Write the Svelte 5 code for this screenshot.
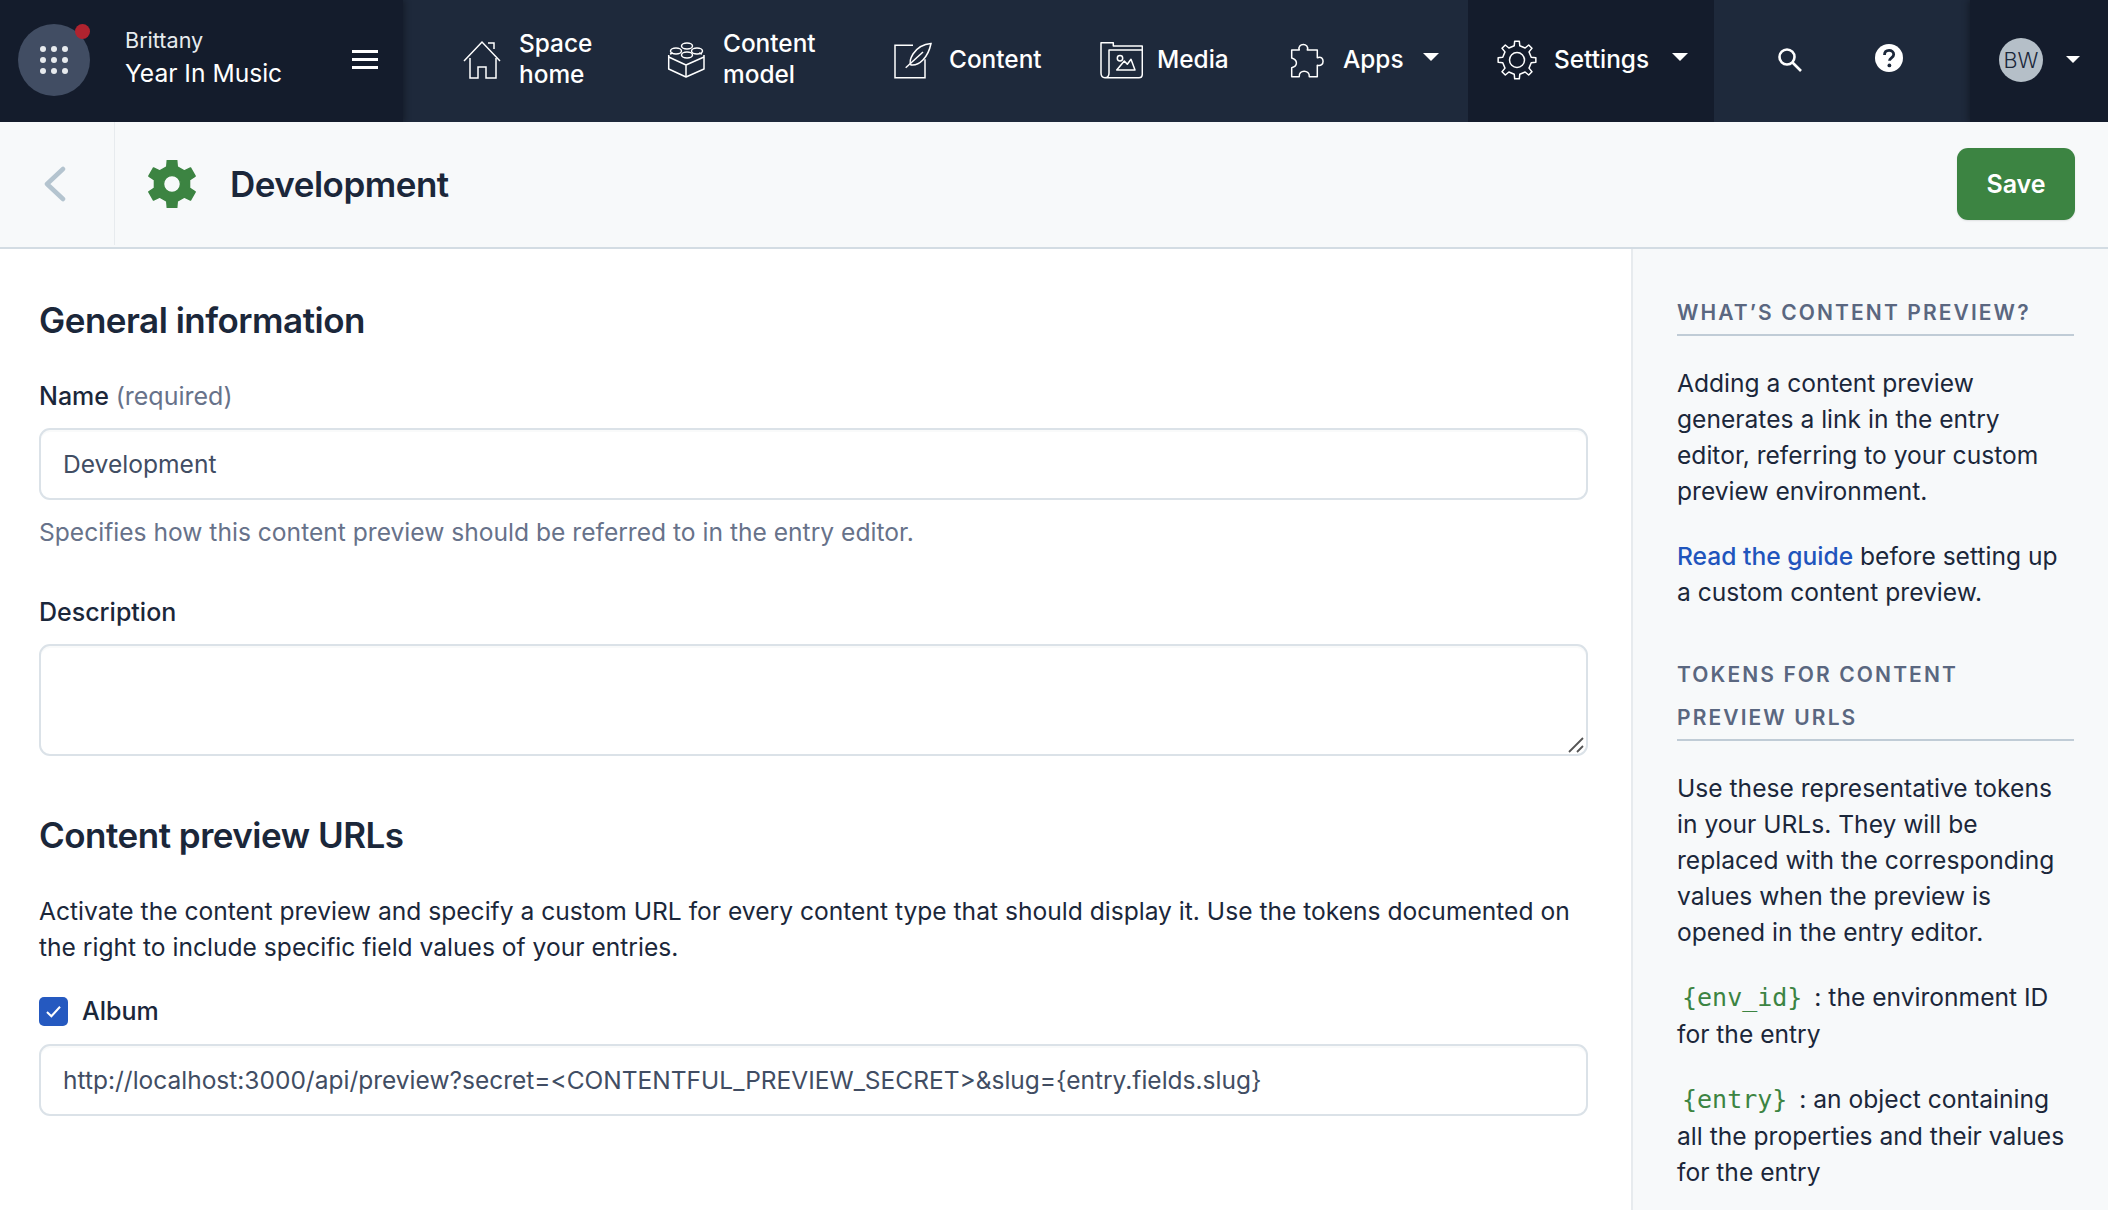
<script>
	const navItems = [
		{ id: 'home', label: ['Space', 'home'] },
		{ id: 'model', label: ['Content', 'model'] },
		{ id: 'content', label: ['Content'] },
		{ id: 'media', label: ['Media'] },
		{ id: 'apps', label: ['Apps'], caret: true }
	];

	// toothed outline around a centre, used by both gear icons
	function gearPath(c, teeth, outer, inner, tipHalf, rootHalf) {
		const pt = (r, deg) => {
			const a = ((deg - 90) * Math.PI) / 180;
			return `${(c + r * Math.cos(a)).toFixed(2)} ${(c + r * Math.sin(a)).toFixed(2)}`;
		};
		const parts = [];
		for (let i = 0; i < teeth; i++) {
			const mid = (360 / teeth) * i;
			parts.push(pt(inner, mid - rootHalf), pt(outer, mid - tipHalf), pt(outer, mid + tipHalf), pt(inner, mid + rootHalf));
		}
		return 'M' + parts.join('L') + 'Z';
	}

	const settingsGear = gearPath(20, 8, 19, 14.5, 7, 11);
	const greenGear = gearPath(24, 6, 24.5, 18, 11, 17);
</script>

<div class="page">
	<nav class="nav">
		<div class="org">
			<div class="switcher">
				<svg viewBox="0 0 28 28" width="28" height="28" fill="#e7ebee">
					{#each [3, 14, 25] as y}
						{#each [3, 14, 25] as x}
							<circle cx={x} cy={y} r="3" />
						{/each}
					{/each}
				</svg>
				<span class="dot"></span>
			</div>
			<div class="org-names">
				<div class="org-small">Brittany</div>
				<div class="org-big">Year In Music</div>
			</div>
			<div class="burger"><span></span><span></span><span></span></div>
		</div>

		<div class="items">
			{#each navItems as item}
				<div class="item item-{item.id}">
					{#if item.id === 'home'}
						<svg class="nav-icon" viewBox="0 0 40 40" fill="none" stroke="#fff" stroke-width="1.5">
							<path d="M2 21 20 2l18 19" />
							<path d="M26 3h6v6" />
							<path d="M8 18v20h8V27h8v11h10V18" />
						</svg>
					{:else if item.id === 'model'}
						<svg class="nav-icon" viewBox="0 0 40 40" fill="none" stroke="#fff" stroke-width="1.5" stroke-linejoin="round">
							<path d="M1.7 15v14L19 37l18-8V15" />
							<path d="M1.7 17 19 25l18-8M19 25v12" />
							<path d="M3 14l3-1M35 14l-3-1" />
							<ellipse cx="9" cy="11" rx="5.5" ry="3" />
							<ellipse cx="20" cy="6" rx="5.5" ry="3" />
							<ellipse cx="30" cy="11" rx="5.5" ry="3" />
							<ellipse cx="20" cy="15" rx="5.5" ry="3" />
						</svg>
					{:else if item.id === 'content'}
						<svg class="nav-icon" viewBox="0 0 40 40" fill="none" stroke="#fff" stroke-width="1.5">
							<path d="M20 5.3H2v32.4h30V19.3" />
							<path d="M38 3.5C30 4 24 8 20 14c-3 5-4 8-2 11 8 1 17-7 20-21.500z" />
							<path d="M12.700 27.700 30 12" />
						</svg>
					{:else if item.id === 'media'}
						<svg class="nav-icon wide" viewBox="0 0 44 40" fill="none" stroke="#fff" stroke-width="1.5" stroke-linejoin="round">
							<path d="M6 37.700h34c2 0 3.300-1.300 3.300-3.700V6h-29V2.700H2V33c0 3 1.500 4.700 4 4.700s4-1.700 4-4.700V10h33.300" />
							<circle cx="21" cy="18.300" r="2.700" />
							<path d="M17.700 30l7.600-9 3 3.300 3.700-5L36 30z" />
						</svg>
					{:else if item.id === 'apps'}
						<svg class="nav-icon" viewBox="0 0 40 40" fill="none" stroke="#fff" stroke-width="1.5" stroke-linejoin="round">
							<path d="M5.700 10h7.600c-2.700-7.300 10.700-7.300 8 0h10v7.700c7.700-3.400 7.700 10 0 7.600v11.400h-8c.7-7.400-11-7.400-10 0H5.700v-9c6.300-1.700 6.300-7.700 0-9.700z" />
						</svg>
					{/if}
					<span class="item-label">
						{#each item.label as line}<span>{line}</span>{/each}
					</span>
					{#if item.caret}<span class="caret"></span>{/if}
				</div>
			{/each}
		</div>

		<div class="settings">
			<svg class="nav-icon" viewBox="0 0 40 40" fill="none" stroke="#fff" stroke-width="1.5" stroke-linejoin="round">
				<path d={settingsGear} />
				<circle cx="20" cy="20" r="7.500" />
			</svg>
			<span class="item-label"><span>Settings</span></span>
			<span class="caret"></span>
		</div>

		<div class="tools">
			<svg class="search" viewBox="0 0 26 26" fill="none" stroke="#fff" stroke-width="2.600">
				<circle cx="10" cy="10" r="7.500" />
				<path d="M15.500 15.500 24 24" />
			</svg>
			<svg class="help" viewBox="0 0 28 28">
				<circle cx="14" cy="14" r="14" fill="#fff" />
				<path d="M9.500 11c0-3 2-4.600 4.600-4.600s4.600 1.600 4.600 4c0 3.400-4.200 3.400-4.200 6.400" fill="none" stroke="#1b273a" stroke-width="2.800" />
				<circle cx="14.400" cy="21.400" r="1.900" fill="#1b273a" />
			</svg>
		</div>

		<div class="account">
			<div class="avatar">BW</div>
			<span class="caret small"></span>
		</div>
	</nav>

	<header class="subheader">
		<div class="back">
			<svg viewBox="0 0 22 36" width="22" height="36" fill="none" stroke="#b4c4cf" stroke-width="4.500" stroke-linecap="round" stroke-linejoin="round">
				<path d="M19 3 3 18l16 15" />
			</svg>
		</div>
		<div class="subheader-title">
			<svg class="gear" viewBox="0 0 48 48" fill="#3c8442" stroke="#3c8442" stroke-width="1.500" stroke-linejoin="round">
				<path fill-rule="evenodd" d="{greenGear}M24 15.500a8.500 8.500 0 1 0 0 17 8.500 8.500 0 0 0 0-17z" />
			</svg>
			<h1>Development</h1>
		</div>
		<button class="save">Save</button>
	</header>

	<div class="body">
		<main class="main">
			<h2>General information</h2>
			<div class="label first">Name <span class="req">(required)</span></div>
			<input class="field" type="text" value="Development" />
			<p class="hint">Specifies how this content preview should be referred to in the entry editor.</p>

			<div class="label desc">Description</div>
			<div class="area-wrap">
				<textarea class="field area"></textarea>
				<svg class="grip" viewBox="0 0 16 16" fill="none" stroke="#555" stroke-width="1.800">
					<path d="M1 15 15 1M9 15l6-6" />
				</svg>
			</div>

			<h2 class="second">Content preview URLs</h2>
			<p class="lead">
				Activate the content preview and specify a custom URL for every content type that should display it. Use the tokens documented on the right to include specific field values of your entries.
			</p>
			<div class="check-row">
				<span class="check">
					<svg viewBox="0 0 16 16" width="19" height="19" fill="none" stroke="#fff" stroke-width="1.700"><path d="M2.500 8.500 6.200 12 13.500 4" /></svg>
				</span>
				<span class="check-label">Album</span>
			</div>
			<input class="field url" type="text" value={'http://localhost:3000/api/preview?secret=<CONTENTFUL_PREVIEW_SECRET>&slug={entry.fields.slug}'} />
		</main>

		<aside class="side">
			<h3>What’s content preview?</h3>
			<p>Adding a content preview generates a link in the entry editor, referring to your custom preview environment.</p>
			<p><a href="#guide">Read the guide</a> before setting up a custom content preview.</p>
			<h3 class="tokens">Tokens for content preview URLs</h3>
			<p>Use these representative tokens in your URLs. They will be replaced with the corresponding values when the preview is opened in the entry editor.</p>
			<p><code>{'{env_id}'}</code> : the environment ID for the entry</p>
			<p><code>{'{entry}'}</code> : an object containing all the properties and their values for the entry</p>
		</aside>
	</div>
</div>

<style>
	:global(body) {
		margin: 0;
		background: #fff;
	}

	.page {
		width: 2108px;
		height: 1210px;
		overflow: hidden;
		display: flex;
		flex-direction: column;
		font-family: Inter, 'Liberation Sans', sans-serif;
		font-size: 24.6px;
		line-height: 36px;
		color: #1b273a;
	}

	/* ------------ nav */

	.nav {
		flex: 0 0 122px;
		display: flex;
		background: #1e293b;
		color: #fff;
	}

	.org {
		width: 403px;
		flex: none;
		display: flex;
		align-items: center;
		padding: 0 0 3px 18px;
		box-sizing: border-box;
		background: #141c2c;
		box-shadow: 2px 0 6px rgba(0, 0, 0, 0.3);
	}

	.switcher {
		position: relative;
		width: 72px;
		height: 72px;
		flex: none;
		display: flex;
		align-items: center;
		justify-content: center;
		border-radius: 50%;
		background: #414d63;
	}

	.dot {
		position: absolute;
		top: 0;
		right: 0;
		width: 15px;
		height: 15px;
		border-radius: 50%;
		background: #b0232f;
	}

	.org-names {
		margin-left: 35px;
		margin-bottom: 5px;
		flex: 1;
	}

	.org-small {
		font-size: 21.6px;
		line-height: 32px;
		color: #e7ebee;
	}

	.org-big {
		line-height: 34px;
	}

	.burger {
		display: flex;
		flex-direction: column;
		gap: 5px;
		margin-right: 25px;
	}

	.burger span {
		display: block;
		width: 26px;
		height: 3px;
		background: #fff;
	}

	.items {
		display: flex;
		align-items: center;
		padding: 0 0 3px 59px;
		width: 1065px;
		box-sizing: border-box;
		flex: none;
	}

	.item {
		display: flex;
		align-items: center;
	}

	.item-home { width: 205px; }
	.item-model { width: 226px; }
	.item-content { width: 206px; }
	.item-media { width: 187px; }

	.item-home .item-label,
	.item-model .item-label {
		margin-bottom: 2px;
	}

	.nav-icon {
		width: 40px;
		height: 40px;
		flex: none;
		margin-right: 17px;
	}

	.item-model .nav-icon,
	.item-content .nav-icon {
		margin-right: 16px;
	}

	.nav-icon.wide {
		width: 44px;
		margin-right: 14px;
	}

	.item-label {
		display: flex;
		flex-direction: column;
		font-size: 24.4px;
		line-height: 31px;
		font-weight: 500;
	}

	.caret {
		width: 0;
		height: 0;
		margin-left: 19px;
		margin-top: -6px;
		border-left: 8px solid transparent;
		border-right: 8px solid transparent;
		border-top: 8px solid #fff;
	}

	.settings {
		width: 246px;
		flex: none;
		display: flex;
		align-items: center;
		padding: 0 0 3px 29px;
		box-sizing: border-box;
		background: #141c2c;
	}

	.settings .caret {
		margin-left: 23px;
	}

	.tools {
		width: 256px;
		flex: none;
		display: flex;
		align-items: center;
		padding: 0 0 3px 63px;
		gap: 72px;
		box-sizing: border-box;
	}

	.search {
		width: 26px;
		height: 26px;
	}

	.help {
		width: 28px;
		height: 28px;
		margin-top: -4px;
	}

	.account {
		flex: 1;
		display: flex;
		align-items: center;
		padding: 0 0 3px 29px;
		background: #141c2c;
		box-shadow: -2px 0 6px rgba(0, 0, 0, 0.3);
	}

	.avatar {
		width: 44px;
		height: 44px;
		border-radius: 50%;
		background: #b5bfc8;
		color: #1b273a;
		font-size: 21.6px;
		font-weight: 300;
		text-align: center;
		line-height: 44px;
	}

	.caret.small {
		margin-left: 23px;
		margin-top: 0;
		border-left-width: 7px;
		border-right-width: 7px;
		border-top-width: 7px;
	}

	/* ------------ subheader */

	.subheader {
		flex: 0 0 127px;
		box-sizing: border-box;
		display: flex;
		align-items: center;
		padding-bottom: 2px;
		background: #f7f9fa;
		border-bottom: 2px solid #d3dce3;
	}

	.back {
		width: 115px;
		height: 100%;
		box-sizing: border-box;
		flex: none;
		display: flex;
		align-items: center;
		padding-left: 44px;
		border-right: 1px solid #e7ebee;
	}

	.subheader-title {
		flex: 1;
		display: flex;
		align-items: center;
		padding-left: 33px;
	}

	.gear {
		width: 48px;
		height: 48px;
		margin-right: 34px;
	}

	h1 {
		margin: 0;
		font-size: 35px;
		line-height: 44px;
		font-weight: 600;
		letter-spacing: -0.5px;
	}

	.save {
		width: 118px;
		height: 72px;
		margin-right: 33px;
		padding: 0;
		border: none;
		border-radius: 11px;
		background: #3c8442;
		color: #fff;
		font: 600 25px Inter, sans-serif;
		box-shadow: 0 1px 2px rgba(0, 0, 0, 0.1);
	}

	/* ------------ body */

	.body {
		flex: 1;
		display: flex;
		min-height: 0;
	}

	.main {
		width: 1631px;
		flex: none;
		box-sizing: border-box;
		padding: 48px 43px 0 39px;
	}

	h2 {
		margin: 0;
		font-size: 35px;
		line-height: 46px;
		font-weight: 600;
		letter-spacing: -0.5px;
	}

	h2.second {
		margin-top: 56px;
	}

	.label {
		font-size: 25px;
		font-weight: 500;
	}

	.label.first {
		margin-top: 35px;
		margin-bottom: 14px;
	}

	.label.desc {
		margin-top: 44px;
		margin-bottom: 14px;
	}

	.req {
		font-weight: 400;
		color: #67728a;
	}

	.field {
		display: block;
		width: 100%;
		height: 72px;
		box-sizing: border-box;
		padding: 0 22px;
		border: 2px solid #dbe2e8;
		border-radius: 11px;
		background: #fff;
		color: #414d63;
		font: 400 24.6px Inter, sans-serif;
		outline: none;
		box-shadow: inset 0 2px 0 rgba(225, 228, 232, 0.2);
	}

	.url {
		font-size: 24.5px;
	}

	.area-wrap {
		position: relative;
	}

	.area {
		height: 112px;
		resize: none;
	}

	.grip {
		position: absolute;
		right: 4px;
		bottom: 3px;
		width: 16px;
		height: 16px;
	}

	.hint {
		margin: 14px 0 0;
		color: #67728a;
	}

	.lead {
		margin: 35px 0 0;
	}

	.check-row {
		display: flex;
		align-items: center;
		margin-top: 28px;
		margin-bottom: 15px;
		height: 36px;
	}

	.check {
		width: 29px;
		height: 29px;
		display: flex;
		align-items: center;
		justify-content: center;
		border-radius: 5px;
		background: #2559c0;
	}

	.check-label {
		margin-left: 14px;
		font-size: 25px;
		font-weight: 500;
	}

	.side {
		flex: 1;
		box-sizing: border-box;
		padding: 42px 34px 0 44px;
		background: #f7f9fa;
		border-left: 2px solid #e7ebee;
	}

	h3 {
		margin: 0 0 29px;
		border-bottom: 2px solid #c0ccd6;
		font-size: 21px;
		line-height: 43px;
		font-weight: 600;
		letter-spacing: 0.1em;
		text-transform: uppercase;
		color: #5a6780;
	}

	h3.tokens {
		margin-top: 43px;
	}

	.side p {
		margin: 0 0 29px;
	}

	.side a {
		color: #1f55bd;
		font-weight: 500;
		text-decoration: none;
	}

	code {
		font-family: 'DejaVu Sans Mono', monospace;
		font-size: 25px;
		color: #3c8442;
		padding: 0 5px;
	}
</style>
